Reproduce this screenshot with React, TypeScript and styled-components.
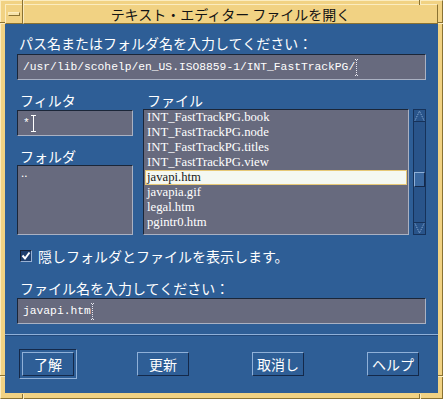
import styled, { createGlobalStyle } from 'styled-components';

const files = [
  'INT_FastTrackPG.book',
  'INT_FastTrackPG.node',
  'INT_FastTrackPG.titles',
  'INT_FastTrackPG.view',
  'javapi.htm',
  'javapia.gif',
  'legal.htm',
  'pgintr0.htm',
];

const selectedFile = 'javapi.htm';

function App() {
  return (
    <>
      <GlobalStyle />
      <Window>
        <Tick $x={22} $y={0} $vertical />
        <Tick $x={419} $y={0} $vertical />
        <Tick $x={22} $y={394} $vertical />
        <Tick $x={419} $y={394} $vertical />
        <Tick $x={0} $y={22} />
        <Tick $x={438} $y={22} />
        <Tick $x={0} $y={375} />
        <Tick $x={438} $y={375} />
        <TitleBar>
          <MenuButton>
            <MenuGlyph />
          </MenuButton>
          <TitleText>テキスト・エディター ファイルを開く</TitleText>
        </TitleBar>
        <Client>
          <Body>
            <Label $indent={2}>パス名またはフォルダ名を入力してください：</Label>
            <Field $gap={3}>
              /usr/lib/scohelp/en_US.ISO8859-1/INT_FastTrackPG/
              <Caret $dotted />
            </Field>
            <Columns>
              <LeftColumn>
                <Label $indent={3}>フィルタ</Label>
                <Field $gap={2}>
                  *
                  <Caret />
                </Field>
                <Label $indent={3} $gap={12}>
                  フォルダ
                </Label>
                <ListBox $height={70} $gap={1}>
                  <ListItem>..</ListItem>
                </ListBox>
              </LeftColumn>
              <RightColumn>
                <Label $indent={4}>ファイル</Label>
                <FileRow>
                  <ListBox $height={126} $grow>
                    {files.map((f) => (
                      <ListItem key={f} $selected={f === selectedFile}>
                        {f}
                      </ListItem>
                    ))}
                  </ListBox>
                  <ScrollBar>
                    <ArrowButton>
                      <svg width="11" height="11" viewBox="0 0 11 11">
                        <polyline
                          points="1,10.5 5.5,1 10,10.5"
                          fill="none"
                          stroke="#8fb0d8"
                          strokeDasharray="1 1"
                        />
                      </svg>
                    </ArrowButton>
                    <Track>
                      <Thumb $offset={50} />
                    </Track>
                    <ArrowButton $down>
                      <svg width="11" height="11" viewBox="0 0 11 11">
                        <polyline
                          points="1,0.5 5.5,10 10,0.5"
                          fill="none"
                          stroke="#8fb0d8"
                          strokeDasharray="1 1"
                        />
                      </svg>
                    </ArrowButton>
                  </ScrollBar>
                </FileRow>
              </RightColumn>
            </Columns>
            <CheckRow>
              <CheckBox>
                <svg width="10" height="10" viewBox="0 0 10 10">
                  <path d="M1.5 4.5 L4 7.5 L8.5 1.5" fill="none" stroke="#fff" strokeWidth="2" />
                </svg>
              </CheckBox>
              <span>隠しフォルダとファイルを表示します。</span>
            </CheckRow>
            <Label $indent={3} $gap={16}>
              ファイル名を入力してください：
            </Label>
            <Field $gap={2}>
              javapi.htm
              <Caret $dotted />
            </Field>
          </Body>
          <Footer>
            <DefaultFrame>
              <Button>了解</Button>
            </DefaultFrame>
            <Button>更新</Button>
            <Button>取消し</Button>
            <Button>ヘルプ</Button>
          </Footer>
        </Client>
      </Window>
    </>
  );
}

export default App;

const GlobalStyle = createGlobalStyle`
  html, body {
    margin: 0;
    padding: 0;
    background: #ffffff;
  }

  body {
    font-family: "Noto Sans CJK JP", "DejaVu Sans", sans-serif;
  }

  * {
    box-sizing: border-box;
  }
`;

const Window = styled.div`
  position: relative;
  display: flex;
  flex-direction: column;
  width: 443px;
  height: 399px;
  padding: 3px 4px 5px 4px;

  background: #f1d283;
  border: 1px solid;
  border-color: #fbecbf #8a7232 #8a7232 #fbecbf;
`;

const Tick = styled.div<{ $x: number; $y: number; $vertical?: boolean }>`
  position: absolute;
  left: ${(p) => p.$x - 1}px;
  top: ${(p) => p.$y - 1}px;
  width: ${(p) => (p.$vertical ? 1 : 5)}px;
  height: ${(p) => (p.$vertical ? 5 : 1)}px;

  background: #8a7232;
  box-shadow: ${(p) => (p.$vertical ? '1px 0 0 #fbecbf' : '0 1px 0 #fbecbf')};
`;

const TitleBar = styled.div`
  display: flex;
  height: 20px;
`;

const MenuButton = styled.div`
  display: flex;
  align-items: center;
  justify-content: center;
  width: 18px;

  border: 1px solid;
  border-color: #fbecbf #8a7232 #8a7232 #fbecbf;
`;

const MenuGlyph = styled.div`
  width: 12px;
  height: 4px;

  background: #f7e3a8;
  border: 1px solid #8a7232;
  border-top-color: #fbecbf;
  border-left-color: #fbecbf;
`;

const TitleText = styled.div`
  display: flex;
  flex: 1;
  align-items: center;
  justify-content: center;

  border: 1px solid;
  border-color: #fbecbf #8a7232 #8a7232 #fbecbf;

  font-size: 14px;
  line-height: 16px;
  color: #141414;
  white-space: pre;
`;

const Client = styled.div`
  display: flex;
  flex: 1;
  flex-direction: column;

  background: #2e5e96;
`;

const Body = styled.div`
  display: flex;
  flex-direction: column;
  padding: 11px 12px 0 12px;
`;

const Label = styled.div<{ $indent?: number; $gap?: number }>`
  margin-top: ${(p) => p.$gap ?? 0}px;
  padding-left: ${(p) => p.$indent ?? 0}px;

  font-size: 14px;
  line-height: 16px;
  color: #ffffff;
  white-space: nowrap;
`;

const Field = styled.div<{ $gap?: number }>`
  display: flex;
  align-items: center;
  height: 26px;
  margin-top: ${(p) => p.$gap ?? 0}px;
  padding-left: 5px;

  background: #676a7e;
  border: 1px solid;
  border-color: #1b2638 #aab1c2 #aab1c2 #1b2638;

  font-family: "Liberation Mono", "DejaVu Sans Mono", monospace;
  font-size: 11.3px;
  color: #ffffff;
  white-space: pre;
`;

const Caret = styled.span<{ $dotted?: boolean }>`
  display: inline-block;
  width: ${(p) => (p.$dotted ? 3 : 5)}px;
  height: 17px;
  margin-left: ${(p) => (p.$dotted ? 0 : 1)}px;

  background: ${(p) =>
    p.$dotted
      ? 'repeating-linear-gradient(#e8e8f0 0 1px, transparent 1px 2px) center / 1px 100% no-repeat'
      : 'linear-gradient(#ffffff, #ffffff) center / 1px 100% no-repeat'};
  border-top: 1px ${(p) => (p.$dotted ? 'dotted #e8e8f0' : 'solid #ffffff')};
  border-bottom: 1px ${(p) => (p.$dotted ? 'dotted #e8e8f0' : 'solid #ffffff')};
`;

const Columns = styled.div`
  display: flex;
  gap: 10px;
  margin-top: 12px;
`;

const LeftColumn = styled.div`
  display: flex;
  flex-direction: column;
  width: 116px;
`;

const RightColumn = styled.div`
  display: flex;
  flex: 1;
  flex-direction: column;
`;

const FileRow = styled.div`
  display: flex;
  gap: 4px;
  margin-top: 1px;
`;

const ListBox = styled.div<{ $height: number; $gap?: number; $grow?: boolean }>`
  flex: ${(p) => (p.$grow ? 1 : 'none')};
  height: ${(p) => p.$height}px;
  margin-top: ${(p) => p.$gap ?? 0}px;
  padding: 0 1px;
  overflow: hidden;

  background: #676a7e;
  border: 1px solid;
  border-color: #1b2638 #aab1c2 #aab1c2 #1b2638;
`;

const ListItem = styled.div<{ $selected?: boolean }>`
  height: 15px;
  padding-left: ${(p) => (p.$selected ? 1 : 2)}px;

  background: ${(p) => (p.$selected ? '#f4f8f2' : 'transparent')};
  border: ${(p) => (p.$selected ? '1px solid #e6c877' : 'none')};

  font-family: "Liberation Serif", "DejaVu Serif", serif;
  font-size: 12.7px;
  line-height: ${(p) => (p.$selected ? 13 : 15)}px;
  color: ${(p) => (p.$selected ? '#1a1a1a' : '#ffffff')};
  white-space: nowrap;
`;

const ScrollBar = styled.div`
  display: flex;
  flex-direction: column;
  width: 13px;
  height: 126px;

  background: #29548a;
  border: 1px solid #16325a;
`;

const ArrowButton = styled.div<{ $down?: boolean }>`
  display: flex;
  align-items: center;
  justify-content: center;
  height: 12px;

  border-bottom: ${(p) => (p.$down ? 'none' : '1px solid #16325a')};
  border-top: ${(p) => (p.$down ? '1px solid #16325a' : 'none')};
`;

const Track = styled.div`
  flex: 1;
`;

const Thumb = styled.div<{ $offset: number }>`
  height: 15px;
  margin-top: ${(p) => p.$offset}px;

  background: #3a68a0;
  border: 1px solid;
  border-color: #8fb0d8 #14294a #14294a #8fb0d8;
`;

const CheckRow = styled.div`
  display: flex;
  align-items: center;
  gap: 6px;
  height: 16px;
  margin-top: 13px;
  padding-left: 3px;

  font-size: 14px;
  color: #ffffff;
  white-space: nowrap;
`;

const CheckBox = styled.div`
  display: flex;
  align-items: center;
  justify-content: center;
  width: 12px;
  height: 12px;

  background: #1f3f6e;
  border: 1px solid;
  border-color: #142034 #9ab2d4 #9ab2d4 #142034;
`;

const Footer = styled.div`
  display: flex;
  flex: 1;
  align-items: flex-start;
  justify-content: space-between;
  margin-top: 10px;
  padding: 17px 19px 0 17px;

  border-top: 1px solid #8fb0d8;
  box-shadow: inset 0 1px 0 #23497a;
`;

const DefaultFrame = styled.div`
  margin: -3px;
  padding: 2px;

  border: 1px solid;
  border-color: #14294a #8fb0d8 #8fb0d8 #14294a;
`;

const Button = styled.div`
  display: flex;
  align-items: center;
  justify-content: center;
  width: 52px;
  height: 24px;

  background: #2e5e96;
  border: 1px solid;
  border-color: #8fb0d8 #14294a #14294a #8fb0d8;

  font-size: 14px;
  line-height: 16px;
  color: #ffffff;
  white-space: nowrap;
`;
